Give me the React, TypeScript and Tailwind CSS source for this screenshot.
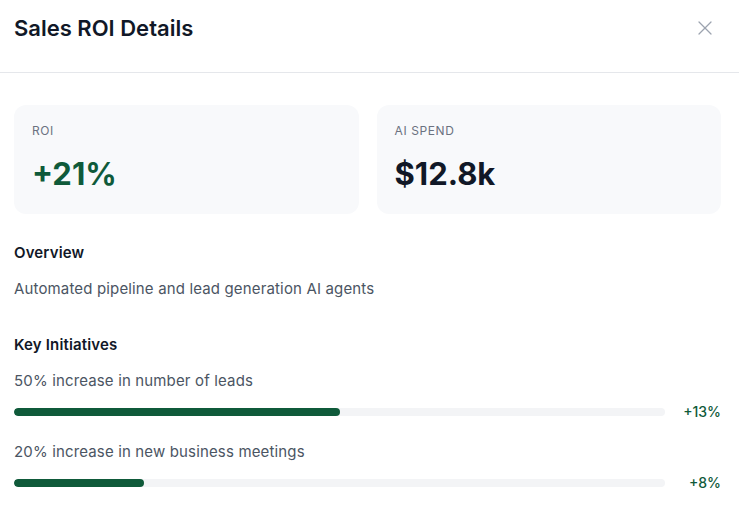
import { X } from "lucide-react"

const initiatives = [
  { label: "50% increase in number of leads", progress: 50, delta: "+13%" },
  { label: "20% increase in new business meetings", progress: 20, delta: "+8%" },
]

function StatCard({ label, value, valueClass }: { label: string; value: string; valueClass: string }) {
  return (
    <div className="rounded-xl bg-[#f8f9fb] pl-[18px] pt-[18px] pb-[22px]">
      <div className="text-xs leading-4 uppercase tracking-wider text-[#6b7280]">{label}</div>
      <div className={`mt-[17px] text-[31px] leading-9 font-bold ${valueClass}`}>{value}</div>
    </div>
  )
}

export default function App() {
  return (
    <div className="w-[739px] h-[510px] bg-white overflow-hidden" style={{ fontFamily: "Inter, 'Noto Sans', sans-serif" }}>
      <div className="h-[73px] border-b border-[#e5e7eb] flex items-start justify-between pl-[14px] pr-[22px] pt-[14px]">
        <h2 className="text-[22px] leading-7 font-semibold text-[#111827]">Sales ROI Details</h2>
        <button className="mt-[2px] text-[#9ca3af]">
          <X className="w-6 h-6" strokeWidth={1.25} />
        </button>
      </div>

      <div className="pl-[14px] pr-[18px] pt-[32px]">
        <div className="grid grid-cols-2 gap-[18px]">
          <StatCard label="ROI" value="+21%" valueClass="text-[#0f5a3a]" />
          <StatCard label="AI Spend" value="$12.8k" valueClass="text-[#111827]" />
        </div>

        <h3 className="mt-[27px] text-[15px] tracking-[0.01em] leading-6 font-semibold text-[#111827]">Overview</h3>
        <p className="mt-3 text-[15px] tracking-[0.01em] leading-6 text-[#4b5563]">Automated pipeline and lead generation AI agents</p>

        <h3 className="mt-8 text-[15px] tracking-[0.01em] leading-6 font-semibold text-[#111827]">Key Initiatives</h3>
        <div className="mt-3 flex flex-col gap-[18px]">
          {initiatives.map((item) => (
            <div key={item.label}>
              <div className="text-[15px] tracking-[0.01em] leading-6 text-[#4b5563]">{item.label}</div>
              <div className="mt-[9px] flex items-center h-5">
                <div className="flex-1 h-2 rounded-full bg-[#f3f4f6] overflow-hidden">
                  <div className="h-full rounded-full bg-[#0f5a3a]" style={{ width: `${item.progress}%` }} />
                </div>
                <div className="w-[56px] text-right text-sm leading-5 font-medium text-[#0f5a3a]">{item.delta}</div>
              </div>
            </div>
          ))}
        </div>
      </div>
    </div>
  )
}
